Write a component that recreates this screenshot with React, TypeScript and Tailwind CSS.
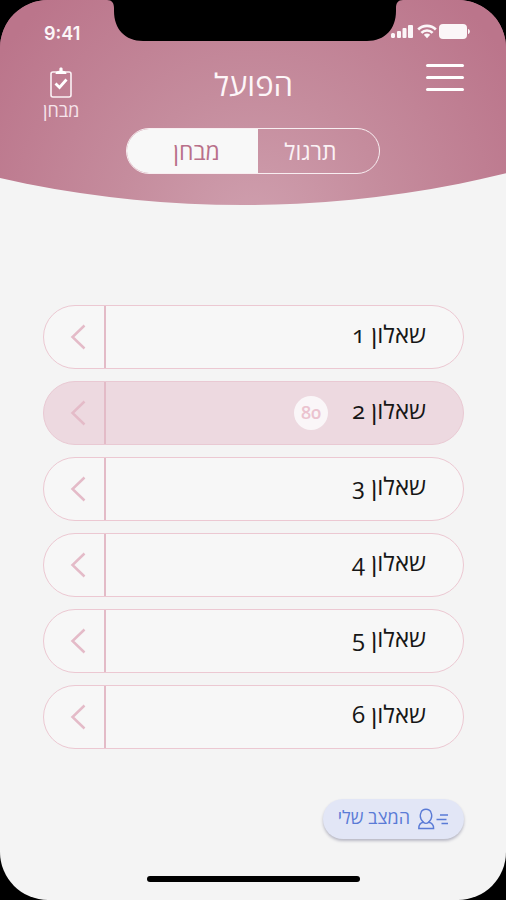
import { useState } from 'react';

interface Quiz {
  id: number;
  score?: number;
}

const quizzes: Quiz[] = [
  { id: 1 },
  { id: 2, score: 80 },
  { id: 3 },
  { id: 4 },
  { id: 5 },
  { id: 6 },
];

function Notch() {
  return (
    <svg
      className="absolute top-0 left-1/2 -translate-x-1/2"
      width="300"
      height="41"
      viewBox="-2 0 300 41"
      aria-hidden="true"
    >
      <path d="M2 0 C7 0 9 3 9 8 V11 C9 29 20 41 38 41 H262 C280 41 291 29 291 11 V8 C291 3 293 0 298 0 Z" fill="#000" />
    </svg>
  );
}

function StatusIcons() {
  return (
    <svg width="80" height="16" viewBox="0 0 80 16" fill="#fbf6f8" aria-hidden="true">
      {/* signal */}
      <rect x="1" y="9" width="4" height="5" rx="1.5" />
      <rect x="7" y="7" width="4" height="7" rx="1" />
      <rect x="12.5" y="4" width="4" height="10" rx="1" />
      <rect x="18" y="1" width="5" height="13" rx="1" />
      {/* wifi */}
      <g fill="none" stroke="#fbf6f8" strokeWidth="2.6">
        <path d="M28.2 5.5 C33 0.7 41 0.7 45.8 5.5" />
        <path d="M31.4 8.8 C34.5 5.7 39.5 5.7 42.6 8.8" />
      </g>
      <path d="M33.8 10.8 C35.6 9.2 38.4 9.2 40.2 10.8 L37 14.2 Z" />
      {/* battery */}
      <rect x="49" y="0" width="28" height="15" rx="4" />
      <path d="M78 5 C80.5 5.5 80.5 9.5 78 10 Z" />
    </svg>
  );
}

function ClipboardIcon() {
  return (
    <svg width="22" height="31" viewBox="0 0 22 31" fill="none" aria-hidden="true">
      <rect x="1" y="5" width="20" height="25" rx="2" stroke="#fbf2f5" strokeWidth="1.6" />
      <path d="M5.5 7 C5.5 4.5 7.5 4 9.4 3.8 V1.5 C9.4 0 12.6 0 12.6 1.5 V3.8 C14.5 4 16.5 4.5 16.5 7 Z" fill="#fff" />
      <path d="M5.5 16.5 L9.5 20.5 L16.5 12.5" stroke="#fff" strokeWidth="2.8" />
    </svg>
  );
}

function StatusIcon() {
  return (
    <svg width="31" height="22" viewBox="0 0 31 22" fill="none" stroke="#5a7bd6" strokeWidth="1.4" aria-hidden="true">
      <path d="M5.5 14.3 C2 11.3 2 7 3 4.5 C4.5 0.2 11.5 0.2 13 4.5 C14 7 14 11.3 10.5 14.3" />
      <path d="M5.5 14.3 C6.8 15.6 9.2 15.6 10.5 14.3 C14 14.8 15.6 17 15.6 20.5 H0.8 C0.8 17 2 14.8 5.5 14.3 Z" />
      <path d="M22 7 H30 M18.5 11.5 H28.5 M23.5 15.5 H30" />
    </svg>
  );
}

function QuizRow({ quiz }: { quiz: Quiz }) {
  const done = quiz.score !== undefined;

  return (
    <li>
      <button
        type="button"
        className={`flex h-16 w-full items-stretch overflow-hidden rounded-full border ${
          done ? 'border-[#e9c9d3] bg-[#edd9e0]' : 'border-[#ecc8d2] bg-[#f7f7f7]'
        }`}
      >
        <span className="flex flex-1 items-center gap-6 pr-9">
          <span className="w-[75px] pb-1.5 text-left text-2xl font-medium whitespace-nowrap text-[#161616]">
            שאלון {quiz.id}
          </span>
          {done && (
            <span className="flex size-[34px] items-center justify-center rounded-full bg-[#faf6f8] pb-0.5 text-lg font-semibold text-[#ebc3cf]">
              {quiz.score}
            </span>
          )}
        </span>
        <span className="flex w-[62px] items-center border-r-2 border-[#e3bbc7] pr-[18px]">
          <svg width="16" height="26" viewBox="0 0 16 26" fill="none" stroke="#e4bbc8" strokeWidth="2.5" aria-hidden="true">
            <path d="M14.5 1.5 L2.5 13 L14.5 24.5" />
          </svg>
        </span>
      </button>
    </li>
  );
}

export default function App() {
  const [mode, setMode] = useState<'practice' | 'test'>('test');

  const tabClass = (active: boolean) =>
    `text-[23px] leading-10 ${active ? 'bg-[#f8f8f8] text-[#b9708a]' : 'text-[#fbf2f5]'}`;

  return (
    <div className="min-h-screen bg-black font-['Open_Sans','Noto_Sans',sans-serif]">
      <div
        dir="rtl"
        className="relative flex min-h-screen flex-col overflow-hidden rounded-[48px] bg-[linear-gradient(#bb758b_100px,#f4f4f4_100px)]"
      >
        <header className="h-[205px] bg-[radial-gradient(circle_at_50%_110%,#cf9fae_0%,#c58c9d_40%,#bb758b_90%)] [clip-path:circle(1110px_at_48%_-905px)]">
          <Notch />
          <div dir="ltr" className="flex h-12 items-end justify-between pr-9 pl-11">
            <span className="font-['Inter',sans-serif] text-lg font-semibold text-[#fbf6f8]">9:41</span>
            <span className="pb-2">
              <StatusIcons />
            </span>
          </div>

          <div className="grid grid-cols-[1fr_auto_1fr] items-start pt-4 pr-[42px] pl-[43px]">
            <button type="button" aria-label="תפריט" className="flex w-[38px] flex-col gap-[9px] justify-self-start">
              <span className="h-[3px] w-full rounded-full bg-white"></span>
              <span className="h-[3px] w-full rounded-full bg-white"></span>
              <span className="h-[3px] w-full rounded-full bg-white"></span>
            </button>
            <h1 className="text-[31px] leading-10 font-medium text-[#fdf6f8]">הפועל</h1>
            <button type="button" className="flex flex-col items-center justify-self-end pt-[3px] text-[#f6e4ea]">
              <ClipboardIcon />
              <span className="text-lg leading-6">מבחן</span>
            </button>
          </div>

          <div className="mx-auto mt-[6px] grid h-[46px] w-[254px] grid-cols-[121px_1fr] overflow-hidden rounded-full border border-[#f8eef1]">
            <button type="button" className={`pr-4 ${tabClass(mode === 'practice')}`} onClick={() => setMode('practice')}>
              תרגול
            </button>
            <button type="button" className={`pl-2 ${tabClass(mode === 'test')}`} onClick={() => setMode('test')}>
              מבחן
            </button>
          </div>
        </header>

        <main className="bg-[#f4f4f4] pt-[100px] pr-[42px] pl-[43px]">
          <ul className="flex flex-col gap-3 [font-variant-numeric:oldstyle-nums]">
            {quizzes.map(quiz => (
              <QuizRow key={quiz.id} quiz={quiz} />
            ))}
          </ul>
          <button
            type="button"
            className="mt-[50px] flex h-10 items-center gap-2 rounded-full bg-[#e2e6f6] px-[15px] text-lg text-[#5a7bd6] shadow-[0_2px_3px_#b8b8c4]"
          >
            <StatusIcon />
            <span className="pb-1">המצב שלי</span>
          </button>
        </main>

        <div className="mx-auto mt-auto mb-[18px] h-[6px] w-[213px] rounded-full bg-black"></div>
      </div>
    </div>
  );
}
